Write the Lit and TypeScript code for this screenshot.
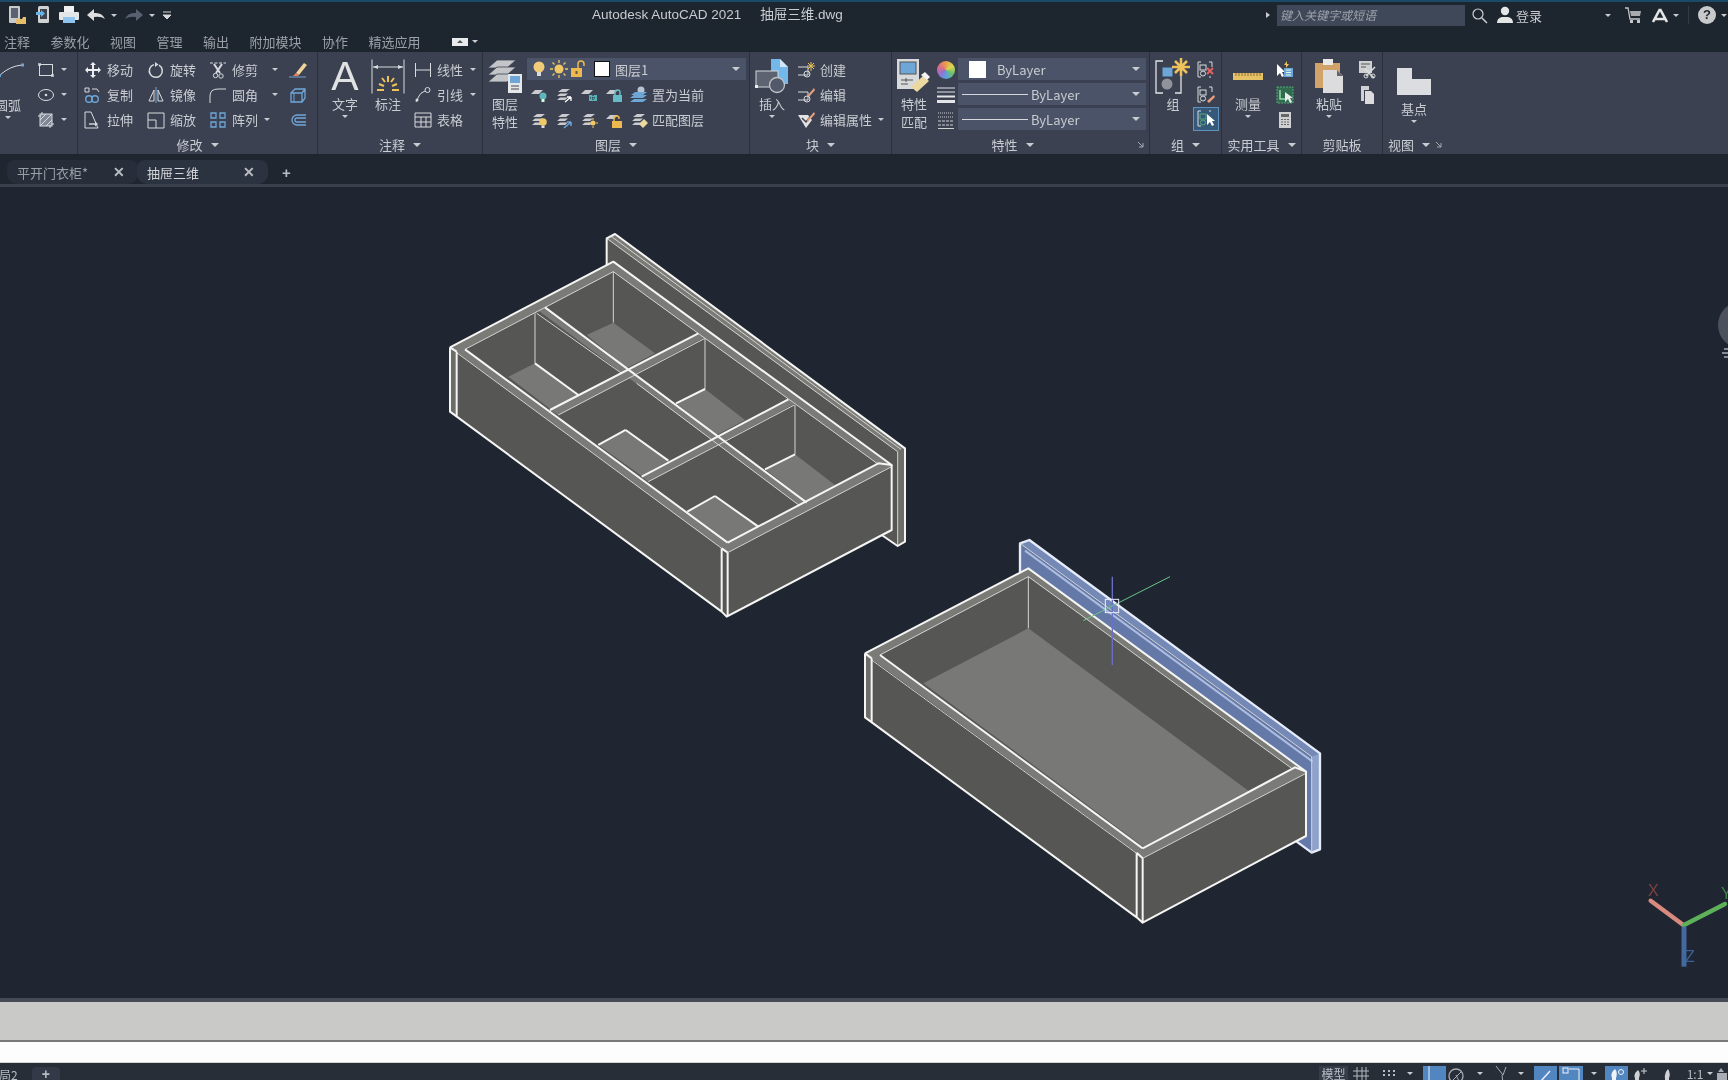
import { LitElement, html, svg, css } from 'lit';
import { customElement } from 'lit/decorators.js';

// small svg wrapper, every icon is drawn on its own little grid
const ic = (body: unknown, w = 18, h = 18) =>
  html`<svg class="ic" width=${w} height=${h} viewBox="0 0 ${w} ${h}" fill="none">${body}</svg>`;

const W = '#d9dbde';
const B = '#6fa6d8';
const Y = '#eec25a';
const G = '#55a878';

const layerStack = (c = '#c9cbce') => svg`<path d="M3 6l4-3h8l-4 3zM2 10l3-2.5h8l-3 2.5zM2 14l3-2.5h8l-3 2.5z" fill=${c}/>`;
const flat = svg`<path d="M1 8l4-4h8l-4 4z" fill="#c9cbce"/>`;

const icons: Record<string, unknown> = {
  rect: ic(svg`<rect x="2.500" y="3.500" width="13" height="11" stroke=${W}/><path d="M1 2h3v3H1zM14 13h3v3h-3z" fill=${W} opacity=".7"/>`),
  ellipse: ic(svg`<ellipse cx="9" cy="9" rx="7.500" ry="5.500" stroke=${W}/><circle cx="9" cy="9" r="1.300" fill=${W}/>`),
  hatch: ic(svg`<rect x="3" y="3" width="12" height="12" fill="#7f8796" stroke=${W}/><path d="M3 9l6-6M3 15L15 3M9 15l6-6M5 1v3M13 14v3M1 5h3M14 13h3" stroke=${W}/>`),
  move: ic(svg`<path d="M9 1l3 3H10v4h4V6l3 3-3 3v-2h-4v4h2l-3 3-3-3h2v-4H4v2L1 9l3-3v2h4V4H6z" fill="#eceef0"/>`),
  rotate: ic(svg`<path d="M12 4.200a6.500 6.500 0 1 1-5-.6" stroke=${W} stroke-width="1.500"/><path d="M8 1l3.500 2.500L8 6z" fill=${W}/>`),
  trim: ic(svg`<path d="M1 2h16" stroke=${W} stroke-dasharray="3 1.500"/><path d="M5 3l6 9M13 3l-6 9" stroke=${W} stroke-width="2"/><circle cx="6.500" cy="14.500" r="2.200" stroke=${W}/><circle cx="12" cy="15" r="2.200" stroke=${W}/>`),
  erase: ic(svg`<path d="M7 12L15 2l3 2-8 10z" fill="#efd59a"/><path d="M4 15l3-3 3 2-1 1z" fill="#e8805f"/><path d="M0 16h17" stroke=${B}/>`),
  copy: ic(svg`<path d="M1 2h4v4H1z" stroke=${W}/><path d="M8 3h5l2 3" stroke=${W}/><circle cx="5" cy="13" r="3.300" stroke=${B} stroke-width="1.400"/><circle cx="11" cy="13" r="3.300" stroke=${B} stroke-width="1.400"/>`),
  mirror: ic(svg`<path d="M7 4v11H2zM11 4v11h5z" stroke=${W}/><path d="M9 1v16" stroke=${B}/>`),
  fillet: ic(svg`<path d="M1 17V10q0-7 8-7h8" stroke=${W}/>`),
  solid: ic(svg`<path d="M2 7h11v9H2zM2 7l4-4h10v9l-3 4M13 7l3-4" stroke=${B} stroke-width="1.300"/><path d="M5 7v9" stroke=${B}/>`),
  stretch: ic(svg`<path d="M1 1h6l7 16H1z" stroke=${W}/><path d="M5 13h7" stroke=${W} stroke-width="1.400"/><path d="M11 10.500l3 2.500-3 2.500z" fill=${W}/>`),
  scale: ic(svg`<path d="M1 2h16v15H1z" stroke=${W} /><path d="M1 9h8v8" stroke=${W}/>`),
  array: ic(svg`<path d="M2 2h5v5H2zM11 2h5v5h-5zM2 11h5v5H2zM11 11h5v5h-5z" stroke=${B} stroke-width="1.300"/>`),
  offset: ic(svg`<path d="M17 4H8a5 5 0 0 0 0 10h9M17 7H8a2 2 0 0 0 0 4h9" stroke=${B} stroke-width="1.300"/>`),
  linear: ic(svg`<path d="M1.500 2v14M16.500 2v14M2 9h14" stroke=${W}/>`),
  leader: ic(svg`<path d="M2 16l3-6q1-3 6-5" stroke=${W}/><circle cx="13.500" cy="4" r="2.500" stroke=${W}/><circle cx="3" cy="14" r="1.500" fill=${W}/>`),
  table: ic(svg`<path d="M1 2h16v14H1zM1 6h16M1 11h16M7 6v10M12 6v10" stroke=${W}/>`),
  annotate: ic(svg`<path d="M1 .5v34M33 .5v34M2 8h30" stroke=${W}/><path d="M2 8l5-2v4zM32 8l-5-2v4z" fill=${W}/><path d="M17 17v6M8 25l5 2M26 25l-5 2M11 19l3 4M23 19l-3 4M6 31h7M21 31h7" stroke=${Y} stroke-width="2"/>`, 34, 35),
  layerProps: ic(svg`
    <path d="M9 1h19l-9 8H0z" fill="#c4c5c8" stroke="#3b4151" stroke-width=".8"/>
    <path d="M9 8h19l-9 8H0z" fill="#c4c5c8" stroke="#3b4151" stroke-width=".8"/>
    <path d="M9 15h19l-9 8H0z" fill="#c4c5c8" stroke="#3b4151" stroke-width=".8"/>
    <rect x="20" y="15" width="14" height="19" fill="#e6e7e9"/><rect x="22" y="17" width="10" height="7" fill=${B}/>
    <path d="M23 27h8M23 30h8" stroke="#445"/>`, 35, 35),
  bulb: ic(svg`<circle cx="9" cy="7" r="5.500" fill="#f0cc7a"/><rect x="7" y="12" width="4" height="4" fill="#d9d9d9"/>`),
  sun: ic(svg`<circle cx="9" cy="9" r="4.500" fill="#f0c867"/><path d="M9 0v3M9 15v3M0 9h3M15 9h3M2.500 2.500l2 2M13.500 13.500l2 2M2.500 15.500l2-2M13.500 4.500l2-2" stroke="#f0c867" stroke-width="1.300"/>`),
  lock: ic(svg`<rect x="1" y="8" width="11" height="9" fill="#edb94f"/><path d="M8 8V4q0-3 3-3t3 3v2" stroke="#edb94f" stroke-width="1.500"/><rect x="5.500" y="11" width="2" height="3" fill="#654"/>`),
  lamp1: ic(svg`${flat}<circle cx="13" cy="10" r="3.500" fill="#5fb7bd"/><rect x="11.500" y="13" width="3" height="3" fill="#cfd"/>`),
  layArrow: ic(svg`${layerStack()}<path d="M10 16l6-5M16 11v4M16 11h-4" stroke="#fff" stroke-width="1.300"/>`),
  lamp2: ic(svg`${flat}<path d="M9 9h8v6h-8z" fill="#57b3b9"/><path d="M10 12h6M13 9v6" stroke="#223" stroke-dasharray="1 1"/>`),
  lockB: ic(svg`${flat}<rect x="8" y="9" width="9" height="7" fill="#66bcc6"/><path d="M10 9V6q0-2 2.500-2T15 6v3" stroke="#66bcc6" stroke-width="1.500"/>`),
  current: ic(svg`<circle cx="11" cy="4" r="3.500" fill="#b7c4d4"/><path d="M1 9l4-3h12l-4 3zM0 12l4-3h13l-4 3zM0 16l4-3h13l-4 3z" fill=${B}/>`),
  layerBulb: ic(svg`${layerStack()}<circle cx="13" cy="11" r="3.800" fill="#f0c867"/><rect x="11.500" y="14.500" width="3" height="2.500" fill="#ddd"/>`),
  layArrow2: ic(svg`${layerStack()}<path d="M9 17l7-6M16 11v4M16 11h-4" stroke=${B} stroke-width="1.500"/>`),
  layerSun: ic(svg`${layerStack()}<circle cx="13" cy="12" r="2.500" fill="#f0c867"/><path d="M13 7v2M13 15v2M8 12h2M16 12h2" stroke="#f0c867"/>`),
  lockY: ic(svg`${flat}<rect x="7" y="10" width="10" height="7" fill="#edb94f"/><path d="M9 10V7q0-2 2.500-2T14 7v1" stroke="#edb94f" stroke-width="1.500"/>`),
  matchLayer: ic(svg`${layerStack()}<path d="M9 13l5-5 4 4-5 5z" fill="#ecd9a0"/>`),
  insert: ic(svg`
    <path d="M16 0h9l8 8v17H16z" fill="#74b8ea"/><path d="M25 0v8h8z" fill="#cfe6f7"/>
    <rect x="1" y="12" width="22" height="16" fill="#5d6370" stroke="#d5d7da"/>
    <circle cx="22" cy="26" r="7.500" fill="#51596a" stroke="#bfc1c5" stroke-width="1.300"/>
    <rect y="26" width="3" height="3" fill="#eee"/>`, 35, 35),
  blockNew: ic(svg`<path d="M1 6h10v8H1" stroke=${W}/><circle cx="10" cy="13" r="3" stroke=${W}/><path d="M14 1v9M10 5h8M11 2l6 6M17 2l-6 6" stroke=${Y}/>`),
  blockEdit: ic(svg`<path d="M1 6h10v8H1" stroke=${W}/><circle cx="10" cy="13" r="3" stroke=${W}/><path d="M11 9l6-7 1 2-6 7z" fill="#e9a07a"/>`),
  attEdit: ic(svg`<path d="M1 4h10l4 5-6 8z" fill="#e2e3e5"/><path d="M5 7l4 4 8-10" stroke="#39404e" stroke-width="1.500"/><path d="M10 9l7-8 1 2-7 8z" fill="#e9a07a"/>`),
  matchProps: ic(svg`
    <rect x="0" y="0" width="22" height="30" fill="#d8d9db"/><rect x="3" y="3" width="16" height="12" fill=${B} stroke="#555"/>
    <path d="M4 21h12M4 25h7M9 19v4" stroke="#555"/><path d="M14 28l12-11 6 5-12 11z" fill="#ecd9a0"/><path d="M24 16l4-3 5 5-3 3z" fill="#f4f4f4"/>`, 34, 34),
  lineweight: ic(svg`<path d="M0 2h18M0 6h18" stroke="#e4e5e7"/><path d="M0 10.500h18" stroke="#e4e5e7" stroke-width="2"/><path d="M0 15.500h18" stroke="#e4e5e7" stroke-width="3"/>`),
  linetype: ic(svg`<path d="M1 2h16M1 6h16" stroke="#cfd1d4" stroke-dasharray="1 1"/><path d="M1 10h16M1 14h16" stroke="#cfd1d4" stroke-dasharray="3 1"/><path d="M1 17.500h16" stroke="#cfd1d4"/>`),
  groupBig: ic(svg`
    <path d="M8 3H1v32h7M26 16v19h-6" stroke="#e2e3e5" stroke-width="1.300"/>
    <rect x="7" y="9" width="11" height="10" fill=${B} stroke="#39404e"/><circle cx="12" cy="26" r="5.500" fill="#90939a"/>
    <path d="M26 0v18M17 9h18M20 3l12 12M32 3L20 15" stroke=${Y} stroke-width="2.500"/>`, 36, 36),
  ungroup: ic(svg`<path d="M4 1H1v15h3M12 1h3v5M12 16h2" stroke=${W}/><rect x="3" y="4" width="6" height="5" stroke=${W}/><circle cx="6" cy="12.500" r="2.500" stroke=${W}/><path d="M10 7l6 6M16 7l-6 6" stroke="#e5605f" stroke-width="2"/>`),
  groupEdit: ic(svg`<path d="M4 1H1v15h3M12 1h3v5" stroke=${W}/><rect x="3" y="4" width="6" height="5" stroke=${W}/><circle cx="6" cy="12.500" r="2.500" stroke=${W}/><path d="M10 15l7-6 1 2-6 6z" fill="#e9a07a"/>`),
  groupSel: ic(svg`<path d="M4 1H1v15h3M12 1h2" stroke=${W}/><rect x="3" y="4" width="6" height="5" stroke=${G}/><circle cx="6" cy="12.500" r="2.500" stroke=${G}/><path d="M10 4v11l3-3 2 4 2-1-2-4h3z" fill="#fff"/>`),
  ruler: ic(svg`<rect x="0" y="2" width="30" height="7" fill="#e6c267"/><path d="M3 2v3M6 2v3M9 2v3M12 2v3M15 2v3M18 2v3M21 2v3M24 2v3M27 2v3" stroke="#8b6f2e"/>`, 30, 10),
  pickInfo: ic(svg`<path d="M1 3v12l3-3 2 4 2-1-2-4h3z" fill="#fff"/><rect x="8" y="7" width="9" height="9" fill=${B}/><path d="M10 9h5M10 11.500h5M10 14h5" stroke="#dfe"/><path d="M8 4l3-4v3h2l-3 4V4z" fill=${Y}/>`),
  selBox: ic(svg`<rect x="1" y="1" width="16" height="16" fill="#2f6b4c" stroke="#55a878" stroke-dasharray="2 1"/><path d="M4 4v9h7" stroke="#8fd8a9" stroke-width="1.500"/><path d="M9 6v10l3-3 2 4 2-1-2-4h3z" fill="#e9ebee"/>`),
  calc: ic(svg`<rect x="3" y="1" width="12" height="16" fill="#cfd0d2"/><rect x="5" y="3" width="8" height="3" fill="#666"/><path d="M5 8.500h8M5 11h8M5 13.500h8" stroke="#666" stroke-dasharray="2 1"/>`),
  paste: ic(svg`
    <path d="M1 5h25v25H1z" fill="#d2a368"/><rect x="9" y="1" width="10" height="6" fill="#e9e9e9"/>
    <path d="M9 12h14l6 6v17H9z" fill="#dcdcde"/><path d="M23 12v6h6z" fill="#666"/>`, 30, 36),
  cut: ic(svg`<rect x="1" y="0" width="13" height="12" fill="#cfd0d2"/><path d="M3 3h9M3 6h5" stroke="#555"/><path d="M7 8l9 9M17 6l-9 9" stroke="#ddd" stroke-width="1.500"/><circle cx="8" cy="15" r="2" stroke="#ddd"/><circle cx="15" cy="15" r="2" stroke="#ddd"/>`),
  copyDoc: ic(svg`<path d="M3 0h8v4H6v11H3z" fill="#cfd0d2"/><path d="M7 5h6l3 3v10H7z" fill="#dcdcde"/>`),
  base: ic(svg`<path d="M0 0h15v11h19v16H0z" fill="#dcdde0"/>`, 34, 27),
  newdoc: ic(svg`<rect x="2" y="1" width="11" height="17" rx="1" fill="#c9cacc"/><rect x="4" y="3" width="7" height="10" fill="#5b6372"/><path d="M9 14h6l1-2h3v7H9z" fill="#e5bd6b"/>`, 20, 20),
  open: ic(svg`<rect x="3" y="1" width="11" height="17" rx="1.500" fill="#d0d2d4"/><rect x="5" y="4" width="7" height="10" fill="#3d4450"/><path d="M1 7h5V5l4 3.500L6 12v-2H1z" fill="#62b5e6"/>`, 16, 20),
  print: ic(svg`<rect x="5" y="1" width="10" height="6" fill="#f0f0f0"/><rect x="0" y="7" width="20" height="8" rx="1" fill="#e4e5e7"/><rect x="4" y="12" width="12" height="6" fill="#8fc4ec"/>`, 20, 20),
  undo: ic(svg`<path d="M0 8l7-6v4q8-1 11 6-4-3-11-2v4z" fill="#dcdee0"/>`, 18, 16),
  redo: ic(svg`<path d="M18 8l-7-6v4Q3 5 0 12q4-3 11-2v4z" fill="#596170"/>`, 18, 16),
  qmenu: ic(svg`<path d="M0 1h8M0 4l4 4 4-4z" stroke="#d5d7da" fill="#d5d7da"/>`, 9, 9),
  search: ic(svg`<circle cx="7" cy="7" r="5" stroke="#cfd1d4" stroke-width="1.200"/><path d="M11 11l5 5" stroke="#cfd1d4" stroke-width="1.500"/>`, 17, 17),
  user: ic(svg`<circle cx="9" cy="5" r="4.200" fill="#e4e5e7"/><path d="M1 17q0-5 5-6h6q5 1 5 6z" fill="#e4e5e7"/>`),
  cart: ic(svg`<path d="M0 1h3l2 11h10" stroke="#c3c5c8" stroke-width="1.300"/><path d="M5 4h11l-1 5H6z" fill="#a9abaf"/><rect x="5" y="13" width="3" height="3" fill="#c3c5c8"/><rect x="12" y="13" width="3" height="3" fill="#c3c5c8"/>`, 17, 17),
  autodesk: ic(svg`<path d="M9 2L2 15M9 2l7 13M4 12h10" stroke="#e4e5e7" stroke-width="2.600"/>`, 18, 17),
  arc: ic(svg`<path d="M1 14q10-9 22-10" stroke=${W}/><rect x="-1" y="13" width="3" height="3" fill=${B}/><rect x="22" y="2.500" width="3" height="3" fill=${B}/>`, 25, 17),
  launcher: ic(svg`<path d="M1 1l5 5M6 2v4H2" stroke="#a7abb3"/>`, 7, 7),
  sbGrid: ic(svg`<path d="M1 5h16M1 10h16M5 1v14M10 1v14M14 1v14" stroke="#b7bac0"/>`, 18, 16),
  sbDots: ic(svg`<path d="M2 5h12M2 9h12" stroke="#b7bac0" stroke-width="2" stroke-dasharray="2 3"/>`, 16, 16),
  sbOrtho: ic(svg`<path d="M3 0v16M3 15h14" stroke="#e9f2fb"/>`, 18, 17),
  sbPolar: ic(svg`<circle cx="8" cy="10" r="7" stroke="#a9acb2" stroke-width="1.300"/><path d="M3 16L14 5M8 9l3 6" stroke="#a9acb2"/>`, 18, 17),
  sbSnap: ic(svg`<path d="M2 0l7 9 3-8M8 9l1 8" stroke="#a9acb2"/>`, 14, 17),
  sbCheck: ic(svg`<path d="M3 15l9-10" stroke="#eef" stroke-width="1.500"/>`, 16, 17),
  sbDyn: ic(svg`<rect x="2" y="2" width="5" height="5" stroke="#f1f4f8"/><path d="M8 3h10v14" stroke="#f1f4f8"/>`, 20, 17),
  sbAnno: ic(svg`<path d="M6 3q3 3 1 9v5H3v-5Q1 7 6 3z" fill="#eef3fa"/><circle cx="12" cy="6" r="2.500" stroke="#eef3fa"/>`, 16, 17),
  sbAuto: ic(svg`<path d="M6 4q3 3 1 8v5H3v-5Q1 8 6 4z" fill="#cfd1d4"/><path d="M12 2v6M9 5h6" stroke="#cfd1d4"/>`, 16, 17),
  sbCone: ic(svg`<path d="M6 3q3 4 1 9v5H3v-5Q2 7 6 3z" fill="#cfd1d4"/>`, 10, 17),
  sbLayout: ic(svg`<path d="M3 7h10v10H3zM7 2l3 4H4z" fill="#a9acb2"/>`, 14, 17),
};

const caret = html`<i class="caret"></i>`;

const tool = (icon: string, label: string, caretClass = '') => html`
  <div class="tool">${icons[icon]}<span class="tool-label">${label}</span>${caretClass ? html`<i class="caret ${caretClass}"></i>` : ''}</div>`;

const mini = (icon: string, withCaret = false) => html`<div class="tool">${icons[icon]}${withCaret ? html`<i class="caret mini-caret"></i>` : ''}</div>`;

const big = (icon: unknown, lines: string[], withCaret = true) => html`
  <div class="big">
    <div class="big-icon">${icon}</div>
    ${lines.map((l) => html`<span class="big-label">${l}</span>`)}
    ${withCaret ? caret : ''}
  </div>`;

const title = (t: string, launcher = false, cls = '') => html`
  <div class="panel-title ${cls}">${t}${caret}${launcher ? html`<span class="launcher">${icons.launcher}</span>` : ''}</div>`;

const MENU = ['注释', '参数化', '视图', '管理', '输出', '附加模块', '协作', '精选应用'];

// status bar strip, left to right: icon or label, width, gap before it, toggled on
const STATUS: { icon?: string; text?: string; caret?: boolean; w: number; gap?: number; kind?: string }[] = [
  { text: '模型', w: 29, kind: 'box' },
  { icon: 'sbGrid', w: 18, gap: 4 },
  { icon: 'sbDots', w: 16, gap: 11 },
  { caret: true, w: 26 },
  { icon: 'sbOrtho', w: 23, kind: 'on' },
  { icon: 'sbPolar', w: 18, gap: 2 },
  { caret: true, w: 28 },
  { icon: 'sbSnap', w: 14 },
  { caret: true, w: 26 },
  { icon: 'sbCheck', w: 23, kind: 'on' },
  { icon: 'sbDyn', w: 24, gap: 2, kind: 'on' },
  { caret: true, w: 22 },
  { icon: 'sbAnno', w: 23, kind: 'on' },
  { icon: 'sbAuto', w: 16, gap: 4 },
  { icon: 'sbCone', w: 38 },
  { text: '1:1', caret: true, w: 28 },
  { icon: 'sbLayout', w: 14 },
];

@customElement('app-root')
export class AppRoot extends LitElement {
  static styles = css`
    :host {
      display: block;
      width: 1728px;
      height: 1080px;
      overflow: hidden;
      background: #202631;
      font-family: "Noto Sans CJK SC", "Noto Sans", sans-serif;
      color: #c9ccd1;
      font-size: 13px;
      filter: blur(0.35px);
    }
    .ic { display: block; flex: none; overflow: visible; }
    .caret {
      display: block;
      flex: none;
      width: 0;
      height: 0;
      border-left: 3px solid transparent;
      border-right: 3px solid transparent;
      border-top: 3px solid #c9ccd1;
    }

    .head { background: #1d252e; border-top: 2px solid #1b4a68; height: 52px; box-sizing: border-box; }
    .title-row { display: flex; align-items: center; height: 26px; }
    .quick { display: flex; align-items: center; flex: none; width: 592px; padding-left: 7px; box-sizing: border-box; }
    .quick .ic { margin-right: 8px; }
    .quick .caret { margin: 0 8px 0 -2px; }
    .app-title { flex: none; display: flex; align-items: baseline; width: 674px; font-family: "Liberation Sans", "Noto Sans CJK SC", sans-serif; font-size: 13.5px; line-height: 18px; white-space: nowrap; }
    .file-name { margin-left: 19px; }
    .search-arrow { border-top: 3px solid transparent; border-bottom: 3px solid transparent; border-left: 4px solid #c9ccd1; border-right: 0; margin-right: 7px; }
    .search {
      flex: none;
      width: 188px;
      height: 21px;
      line-height: 20px;
      background: #3f4859;
      color: #9ea3ab;
      font-style: italic;
      font-size: 12px;
      padding-left: 3px;
      box-sizing: border-box;
      margin-right: 6px;
    }
    .account { display: flex; align-items: center; }
    .account .user { margin-left: 8px; }
    .login { margin-left: 2px; width: 89px; }
    .cart { margin-left: 14px; }
    .adsk { margin: 0 4px 0 9px; }
    .sep { width: 1px; height: 18px; background: #333b47; margin: 0 9px; }
    .help {
      display: block;
      width: 18px;
      height: 18px;
      border-radius: 50%;
      background: #c8c9cb;
      color: #1d252e;
      font: bold 13px/18px "Liberation Sans", sans-serif;
      text-align: center;
      margin-right: 5px;
    }

    .menu { display: flex; align-items: center; gap: 20.5px; height: 24px; padding: 3px 0 0 4px; box-sizing: border-box; color: #9ba0a8; }
    .menu span { white-space: nowrap; }
    .layout { display: flex; align-items: center; gap: 4px; margin-left: 11px; }
    .layout-btn { display: flex; justify-content: center; align-items: center; width: 16px; height: 8px; background: #e9eaec; }
    .layout-btn::after { content: ""; border: 3px solid transparent; border-top: 0; border-bottom: 3px solid #555; }

    .ribbon { display: flex; height: 102px; background: #3b4151; overflow: hidden; }
    .panel { flex: none; display: flex; flex-direction: column; box-sizing: border-box; border-right: 1px solid #2a303b; }
    .panel.draw { width: 78px; }
    .panel.modify { width: 240px; }
    .panel.annot { width: 165px; }
    .panel.layers { width: 267px; }
    .panel.block { width: 142px; }
    .panel.props { width: 258px; }
    .panel.group { width: 72px; }
    .panel.util { width: 80px; }
    .panel.clip { width: 81px; }
    .panel.last { flex: 1; border-right: 0; }
    .panel-body { display: flex; height: 83px; padding-top: 5px; box-sizing: border-box; }
    .panel-title { display: flex; align-items: center; justify-content: center; gap: 8px; height: 19px; line-height: 19px; white-space: nowrap; position: relative; }
    .panel-title .caret { border-left-width: 4px; border-right-width: 4px; border-top-width: 4px; }
    .panel-title.shift-left { padding-right: 16px; }
    .panel-title.start { justify-content: flex-start; padding-left: 5px; }
    .launcher { position: absolute; right: 5px; top: 6px; }
    .launcher.inline { position: static; margin-left: -3px; }
    .col { display: flex; flex-direction: column; flex: none; }
    .tool { display: flex; align-items: center; height: 25px; white-space: nowrap; }
    .tool-label { margin-left: 5px; }
    .tool-caret { margin-left: 14px; }
    .short-caret { margin-left: 7px; }
    .mini-caret { margin-left: 6px; }
    .big { display: flex; flex-direction: column; align-items: center; flex: none; }
    .big-icon { height: 38px; display: flex; align-items: center; justify-content: center; }
    .big-label { line-height: 18px; white-space: nowrap; }
    .big .caret { margin-top: 2px; }
    .big-a { font: 41px/38px "Liberation Sans", sans-serif; color: #e1e2e4; }

    .pl-4 { padding-left: 4px; }
    .pl-5 { padding-left: 5px; }
    .pl-6 { padding-left: 6px; }
    .pl-7 { padding-left: 7px; }
    .pl-8 { padding-left: 8px; }
    .pl-10 { padding-left: 10px; }
    .pl-12 { padding-left: 12px; }
    .pl-14 { padding-left: 14px; }
    .w-30 { width: 30px; }
    .w-32 { width: 32px; }
    .w-34 { width: 34px; }
    .w-36 { width: 36px; }
    .w-38 { width: 38px; }
    .w-42 { width: 42px; }
    .w-62 { width: 62px; }
    .w-63 { width: 63px; }
    .w-80 { width: 80px; }

    .arc-col { width: 30px; margin-left: -7px; }
    .arc-line { display: flex; align-items: center; height: 25px; margin-left: 6px; }
    .arc-big { margin-top: 14px; }
    .draw-tools { margin-left: 14px; }
    .after-annot { margin-left: 3px; }
    .annot-tools { margin-left: 5px; }
    .layer-col { width: 219px; margin-left: 4px; }
    .layer-row { gap: 7px; padding-left: 3px; }
    .layer-row .tight { margin-left: -3px; }
    .block-tools { margin-left: 8px; }
    .wheel-col { width: 20px; margin: 0 -7px 0 8px; }
    .prop-col { width: 188px; margin-left: 8px; }
    .group-tools { margin-left: 5px; }
    .util-tools { margin-left: 12px; }
    .clip-tools { margin-left: 14px; }
    .base-icon { height: 32px; padding-top: 11px; display: block; }

    .dropdown {
      display: flex;
      align-items: center;
      height: 22px;
      background: #4a5367;
      box-sizing: border-box;
      padding: 0 6px 0 4px;
      margin: 1px 0 2px;
      white-space: nowrap;
    }
    .dropdown .caret { margin-left: auto; border-left-width: 4px; border-right-width: 4px; border-top-width: 4px; }
    .dropdown.layer { padding-left: 3px; gap: 2px; }
    .dropdown.layer .swatch { margin: 0 3px 0 4px; }
    .dropdown.color { padding-left: 11px; }
    .color-name { margin-left: 11px; }
    .swatch { width: 14px; height: 14px; background: #fff; border: 1px solid #111; flex: none; }
    .swatch.plain { width: 17px; height: 17px; border: 0; }
    .rule { width: 66px; height: 1px; background: #d6d8db; margin: 0 3px 0 0; flex: none; }
    .wheel {
      display: block;
      width: 18px;
      height: 18px;
      border-radius: 50%;
      background: conic-gradient(#e8a04e, #d8d84e, #6cc06c, #5c9fe0, #9a6fd0, #e06f80, #e8a04e);
    }
    .active-box { background: #36597a; border: 1px solid #6192bd; height: 24px; padding: 0 3px; box-sizing: border-box; margin-left: -4px; }

    .tabs { display: flex; align-items: flex-end; height: 30px; background: #1f2630; border-bottom: 3px solid #3a404c; }
    .tab {
      display: flex;
      align-items: center;
      justify-content: space-between;
      width: 131px;
      height: 24px;
      margin-left: -1px;
      padding: 0 13px 0 10px;
      box-sizing: border-box;
      border-radius: 8px 8px 10px 10px;
    }
    .tab.first { margin-left: 7px; color: #9ba0a8; background: #272e39; }
    .tab.on { color: #d4d6da; background: #2c3340; }
    .close { font: bold 14px "Liberation Sans", sans-serif; color: #b9bcc2; }
    .plus { margin-left: 14px; color: #b9bcc2; font: bold 15px "Liberation Sans", sans-serif; padding-bottom: 3px; }

    .view { display: block; width: 1728px; height: 811px; background: #202631; }
    .face { fill: #565654; }
    .rim { fill: #7a7a77; }
    .floor { fill: #787977; }
    .strip { fill: #6c6c69; }
    .edge { stroke: #f5f5f3; stroke-width: 6; fill: none; stroke-linejoin: round; }
    .thin { stroke: #d4d4d0; stroke-width: 3; fill: none; }
    .plate { fill: #6479a8; }
    .plate-top { fill: #7489b6; }
    .plate-side { fill: #8ea2cb; }
    .plate-line { stroke: #aebde0; stroke-width: 6; fill: none; }
    .glow { stroke: #e6ecf9; stroke-width: 7; fill: none; stroke-linejoin: round; }
    .ucs-z { stroke: #6a70c8; stroke-width: 4; }
    .ucs-y { stroke: #6cc48a; stroke-width: 3; }
    .ucs-box { stroke: #eef; stroke-width: 3; fill: none; }
    .nav { fill: #4c515b; }
    .nav-tick { stroke: #a9acb2; stroke-width: 1.500; }
    .axis-x { stroke: #d98a7e; stroke-width: 13; stroke-linecap: round; }
    .axis-y { stroke: #5fb05a; stroke-width: 13; stroke-linecap: round; }
    .axis-z { stroke: #43699f; stroke-width: 15; }
    .axis-label { font: 16px "Liberation Sans", sans-serif; }
    .lx { fill: #7e3f45; }
    .ly { fill: #3f8048; }
    .lz { fill: #3b5f97; }

    .cmd-edge { height: 4px; background: #454b55; }
    .cmd { height: 38px; background: #c9c9c7; border-bottom: 2px solid #77797a; }
    .cmd-input { height: 20px; background: #fdfdfd; border-bottom: 1px solid #d4d6d4; }
    .status { display: flex; align-items: flex-start; height: 17px; background: #272e38; overflow: hidden; color: #b9bcc2; font-size: 12px; padding-top: 3px; box-sizing: border-box; }
    .sb-left { display: flex; align-items: center; width: 1319px; flex: none; }
    .sb-page { margin-left: -1px; }
    .sb-add { margin-left: 14px; padding: 0 10px; background: #323a47; font: bold 14px/15px "Liberation Sans", sans-serif; border-radius: 4px 4px 0 0; }
    .sb-item { flex: none; display: flex; justify-content: center; align-items: flex-start; gap: 4px; height: 18px; line-height: 15px; white-space: nowrap; }
    .sb-item.box { background: #363d4a; }
    .sb-item.on { background: #5286c0; }
    .sb-item .caret { margin-top: 6px; }
  `;

  // zoom-crop coordinates: 3 units are one pixel of the page
  private drawerOne() {
    return svg`
      <g transform="translate(430 220) scale(.33333)">
        <polygon class="face" points="530,55 555,42 1425,685 1425,965 1403,978 1355,945 1385,930 1385,735 550,125 530,135"/>
        <polygon class="rim" points="530,55 555,42 1425,685 1403,695"/>
        <polygon class="strip" points="1403,695 1425,685 1425,965 1403,978"/>
        <path class="thin" d="M530 55L1403 695V978M545 50L1413 688"/>
        <path class="edge" d="M530 135V55L555 42L1425 685V965L1403 978L1355 945"/>

        <polygon class="strip" points="60,382 80,395 80,590 60,575"/>
        <polygon class="face" points="80,395 875,985 875,1175 80,590"/>
        <polygon class="face" points="875,985 893,998 1385,740 1385,930 890,1190 875,1175"/>
        <polygon class="rim" points="60,382 550,125 1385,735 1385,740 893,998 875,985"/>
        <polygon class="face" points="105,388 550,155 1345,733 893,968"/>

        <polygon class="floor" points="235,470 315,430 445,525 365,570"/>
        <polygon class="floor" points="470,345 550,308 675,400 590,445"/>
        <polygon class="floor" points="505,675 587,630 715,722 635,768"/>
        <polygon class="floor" points="738,550 825,507 945,600 860,645"/>
        <polygon class="floor" points="772,875 855,828 985,920 895,965"/>
        <polygon class="floor" points="1005,748 1095,703 1215,795 1130,845"/>

        <polygon class="rim" points="320,268 345,262 1130,848 1110,858"/>
        <polygon class="rim" points="360,570 805,340 825,352 385,585"/>
        <polygon class="rim" points="635,770 1075,538 1093,552 655,785"/>
        <polygon class="rim" points="80,395 105,388 893,968 875,985"/>

        <path class="thin" d="M315 280V430M550 155V308M825 355V507M1095 555V703"/>
        <path class="edge" d="M315 430L445 525M825 507L738 550M587 630L505 675M587 630L715 722M855 828L772 875M855 828L985 920M1095 703L1005 748"/>
        <path class="thin" d="M105 388L550 155L1345 733M320 280L575 460M620 490L1110 858M385 585L825 355M655 785L1093 555M80 398L875 985M893 998L1385 740"/>
        <path class="edge" d="M345 262L1130 848M360 570L805 340M635 770L1075 538M105 388L893 968"/>
        <path class="edge" d="M60 382L550 125L1385 735L1345 730L893 968"/>
        <path class="edge" d="M60 382V575L875 1175L890 1190L1385 930V735M80 395V590M875 985V1175M893 998V1190M60 382L80 395M875 985L893 998"/>
      </g>`;
  }

  private drawerTwo() {
    return svg`
      <g transform="translate(850 530) scale(.33333)">
        <polygon class="plate" points="510,40 538,30 1410,670 1410,958 1385,968 1340,935 1368,920 1368,725 545,120 510,130"/>
        <polygon class="plate-top" points="510,40 538,30 1410,670 1385,680"/>
        <polygon class="plate-side" points="1385,680 1410,670 1410,958 1385,968"/>
        <path class="plate-line" d="M525 62L1388 695"/>
        <path class="glow" d="M510 130V40L538 30L1410 670V958L1385 968L1340 935"/>
        <path class="thin" d="M510 40L1385 680V968"/>

        <polygon class="strip" points="45,370 65,385 65,575 45,562"/>
        <polygon class="face" points="65,390 860,970 860,1160 65,575"/>
        <polygon class="face" points="860,968 878,985 1368,730 1368,918 878,1178 860,1162"/>
        <polygon class="rim" points="45,370 535,115 1368,725 1368,730 878,985 860,968"/>
        <polygon class="face" points="90,375 535,140 1325,715 878,955"/>
        <polygon class="floor" points="220,460 535,295 1195,782 880,950"/>
        <polygon class="rim" points="65,388 90,375 878,955 860,968"/>

        <path class="thin" d="M535 140V295M90 375L535 140L1325 715M65 390L860 970M878 985L1368 730"/>
        <path class="edge" d="M90 375L878 955"/>
        <path class="edge" d="M45 370L535 115L1368 725L1335 712L878 955"/>
        <path class="edge" d="M45 370V562L860 1162L878 1178L1368 918V725M65 385V575M860 968V1162M878 985V1178M45 370L65 385M860 968L878 985"/>

        <path class="ucs-z" d="M787 140V405"/>
        <path class="ucs-y" d="M700 272L960 140"/>
        <rect class="ucs-box" x="766" y="208" width="40" height="40"/>
      </g>`;
  }

  private gizmo() {
    return svg`
      <ellipse class="nav" cx="1740" cy="325" rx="22" ry="23"/>
      <path class="nav-tick" d="M1724 349h6M1722 353h8M1724 357h6"/>
      <g transform="translate(1610 860) scale(.33333)">
        <path class="axis-x" d="M122 122L220 195"/>
        <path class="axis-y" d="M222 195L345 132"/>
        <path class="axis-z" d="M222 200V320"/>
      </g>
      <text class="axis-label lx" x="1648" y="896">X</text>
      <text class="axis-label ly" x="1721" y="899">Y</text>
      <text class="axis-label lz" x="1685" y="962">Z</text>`;
  }

  private ribbon() {
    return html`
      <div class="ribbon">
        <div class="panel draw">
          <div class="panel-body">
            <div class="col arc-col">
              <div class="arc-line">${icons.arc}</div>
              <div class="big arc-big"><span class="big-label">圆弧</span>${caret}</div>
            </div>
            <div class="col draw-tools">${mini('rect', true)}${mini('ellipse', true)}${mini('hatch', true)}</div>
          </div>
        </div>

        <div class="panel modify">
          <div class="panel-body pl-6">
            <div class="col w-63">${tool('move', '移动')}${tool('copy', '复制')}${tool('stretch', '拉伸')}</div>
            <div class="col w-62">${tool('rotate', '旋转')}${tool('mirror', '镜像')}${tool('scale', '缩放')}</div>
            <div class="col w-80">${tool('trim', '修剪', 'tool-caret')}${tool('fillet', '圆角', 'tool-caret')}${tool('array', '阵列', 'mini-caret')}</div>
            <div class="col">${mini('erase')}${mini('solid')}${mini('offset')}</div>
          </div>
          ${title('修改')}
        </div>

        <div class="panel annot">
          <div class="panel-body pl-8">
            <div class="w-38">${big(html`<span class="big-a">A</span>`, ['文字'])}</div>
            <div class="w-42 after-annot">${big(icons.annotate, ['标注'], false)}</div>
            <div class="col annot-tools">${tool('linear', '线性', 'short-caret')}${tool('leader', '引线', 'short-caret')}${tool('table', '表格')}</div>
          </div>
          ${title('注释')}
        </div>

        <div class="panel layers">
          <div class="panel-body pl-4">
            <div class="w-36">${big(icons.layerProps, ['图层', '特性'], false)}</div>
            <div class="col layer-col">
              <div class="dropdown layer">
                ${icons.bulb}${icons.sun}${icons.lock}<span class="swatch"></span><span>图层1</span>${caret}
              </div>
              <div class="tool layer-row">${icons.lamp1}${icons.layArrow}${icons.lamp2}${icons.lockB}${icons.current}<span class="tight">置为当前</span></div>
              <div class="tool layer-row">${icons.layerBulb}${icons.layArrow2}${icons.layerSun}${icons.lockY}${icons.matchLayer}<span class="tight">匹配图层</span></div>
            </div>
          </div>
          ${title('图层')}
        </div>

        <div class="panel block">
          <div class="panel-body pl-5">
            <div class="w-34">${big(icons.insert, ['插入'])}</div>
            <div class="col block-tools">${tool('blockNew', '创建')}${tool('blockEdit', '编辑')}${tool('attEdit', '编辑属性', 'mini-caret')}</div>
          </div>
          ${title('块')}
        </div>

        <div class="panel props">
          <div class="panel-body pl-7">
            <div class="w-30">${big(icons.matchProps, ['特性', '匹配'], false)}</div>
            <div class="col wheel-col">
              <div class="tool"><span class="wheel"></span></div>${mini('lineweight')}${mini('linetype')}
            </div>
            <div class="col prop-col">
              <div class="dropdown color"><span class="swatch plain"></span><span class="color-name">ByLayer</span>${caret}</div>
              <div class="dropdown"><span class="rule"></span><span>ByLayer</span>${caret}</div>
              <div class="dropdown"><span class="rule"></span><span>ByLayer</span>${caret}</div>
            </div>
          </div>
          ${title('特性', true, 'shift-left')}
        </div>

        <div class="panel group">
          <div class="panel-body pl-4">
            <div class="w-38">${big(icons.groupBig, ['组'], false)}</div>
            <div class="col group-tools">${mini('ungroup')}${mini('groupEdit')}
              <div class="tool active-box">${icons.groupSel}</div>
            </div>
          </div>
          ${title('组')}
        </div>

        <div class="panel util">
          <div class="panel-body pl-10">
            <div class="w-32">${big(icons.ruler, ['测量'])}</div>
            <div class="col util-tools">${mini('pickInfo')}${mini('selBox')}${mini('calc')}</div>
          </div>
          ${title('实用工具')}
        </div>

        <div class="panel clip">
          <div class="panel-body pl-12">
            <div class="w-30">${big(icons.paste, ['粘贴'])}</div>
            <div class="col clip-tools">${mini('cut')}${mini('copyDoc')}</div>
          </div>
          <div class="panel-title">剪贴板</div>
        </div>

        <div class="panel last">
          <div class="panel-body pl-14">
            <div class="w-34">
              <div class="big"><div class="base-icon">${icons.base}</div><span class="big-label">基点</span>${caret}</div>
            </div>
          </div>
          <div class="panel-title start">视图${caret}<span class="launcher inline">${icons.launcher}</span></div>
        </div>
      </div>`;
  }

  render() {
    return html`
      <div class="head">
        <div class="title-row">
          <div class="quick">
            ${icons.newdoc}${icons.open}${icons.print}${icons.undo}${caret}${icons.redo}${caret}${icons.qmenu}
          </div>
          <div class="app-title"><span>Autodesk AutoCAD 2021</span><span class="file-name">抽屉三维.dwg</span></div>
          <i class="caret search-arrow"></i>
          <div class="search">键入关键字或短语</div>
          <div class="account">
            ${icons.search}<span class="user">${icons.user}</span><span class="login">登录</span>
            ${caret}<span class="cart">${icons.cart}</span><span class="adsk">${icons.autodesk}</span>${caret}
            <span class="sep"></span><span class="help">?</span>${caret}
          </div>
        </div>
        <div class="menu">
          ${MENU.map((t) => html`<span>${t}</span>`)}
          <div class="layout"><span class="layout-btn"></span>${caret}</div>
        </div>
      </div>
      ${this.ribbon()}
      <div class="tabs">
        <div class="tab first"><span>平开门衣柜*</span><span class="close">✕</span></div>
        <div class="tab on"><span>抽屉三维</span><span class="close">✕</span></div>
        <span class="plus">+</span>
      </div>
      <svg class="view" viewBox="0 187 1728 811">
        ${this.drawerOne()} ${this.drawerTwo()} ${this.gizmo()}
      </svg>
      <div class="cmd-edge"></div>
      <div class="cmd"></div>
      <div class="cmd-input"></div>
      <div class="status">
        <div class="sb-left"><span class="sb-page">局2</span><span class="sb-add">+</span></div>
        ${STATUS.map((s) => html`
          <div class="sb-item ${s.kind ?? ''}" style="width:${s.w}px;margin-left:${s.gap ?? 0}px">
            ${s.icon ? icons[s.icon] : ''}${s.text ?? ''}${s.caret ? caret : ''}
          </div>`)}
      </div>
    `;
  }
}
